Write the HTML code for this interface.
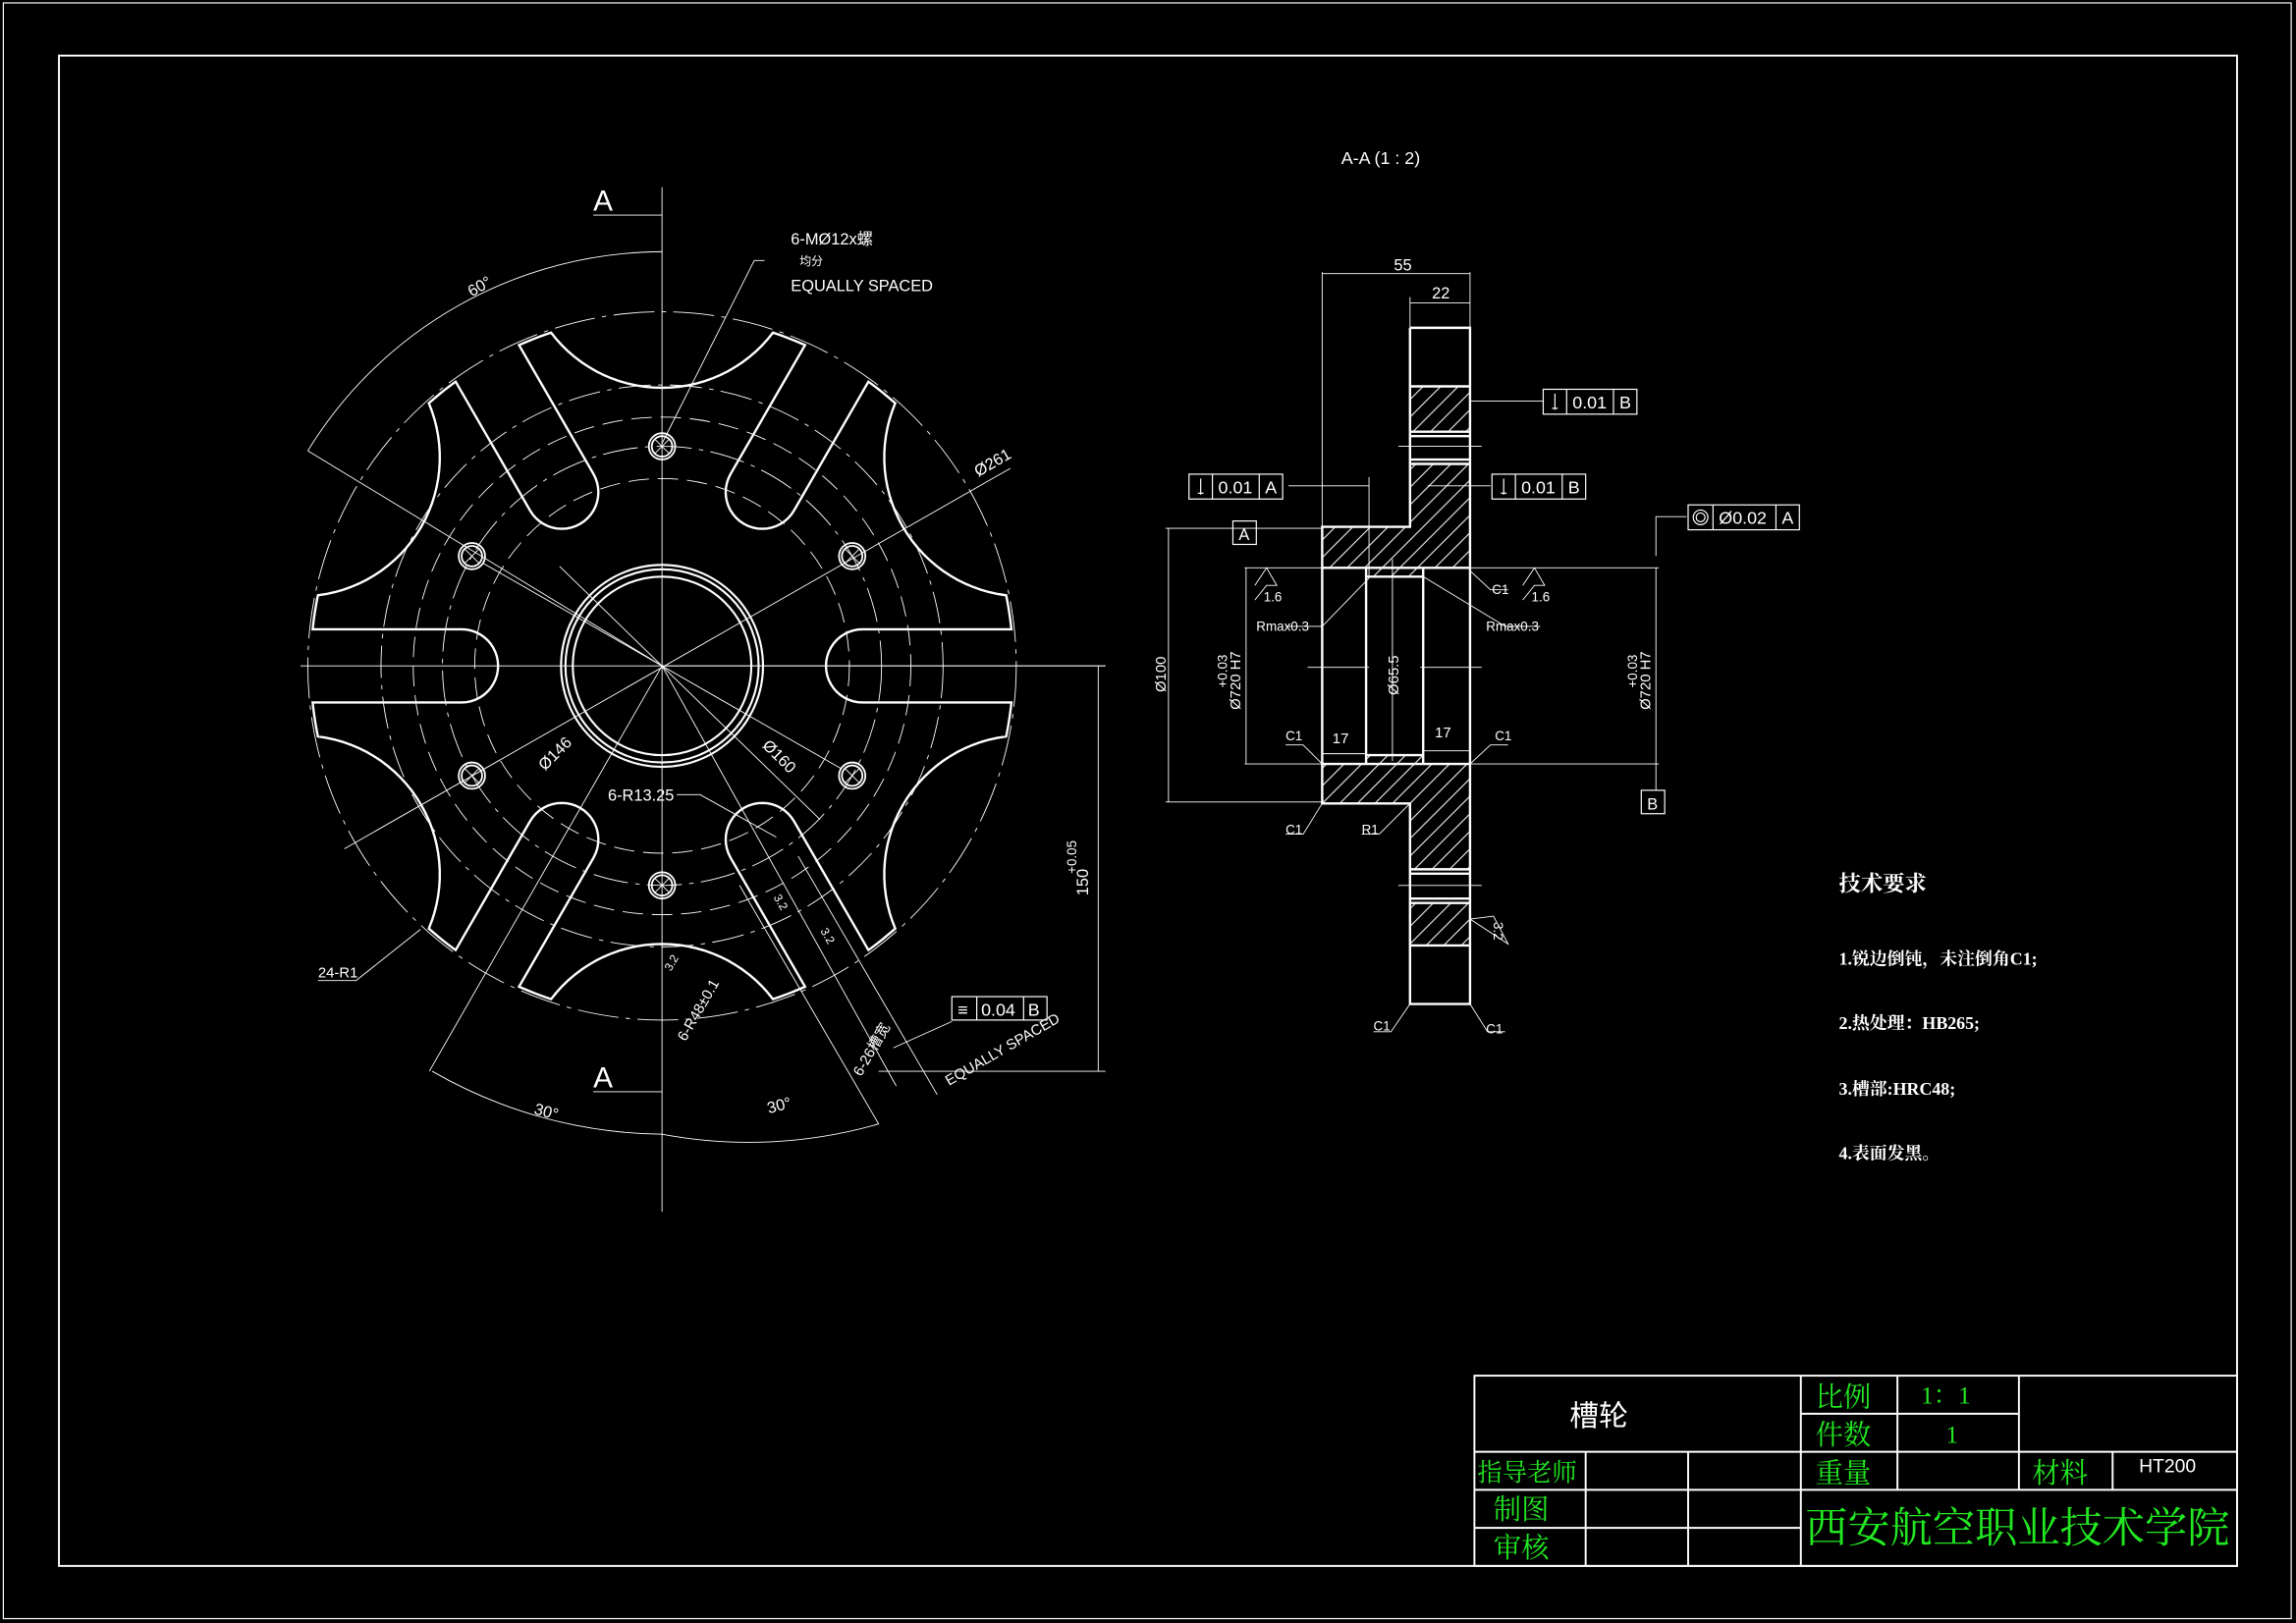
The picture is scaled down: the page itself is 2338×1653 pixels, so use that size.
<!DOCTYPE html>
<html><head><meta charset="utf-8">
<style>
html,body{margin:0;padding:0;background:#000;width:2338px;height:1653px;overflow:hidden}
svg{display:block}
text{font-family:"Liberation Sans","Noto Sans CJK SC",sans-serif;fill:#fff}
.g{fill:#22e822;font-family:"Liberation Serif","Noto Serif CJK SC","Noto Sans CJK SC",serif}
.c{font-family:"Liberation Serif","Noto Serif CJK SC","Noto Sans CJK SC",serif;font-weight:bold}
</style></head>
<body>
<svg id="s" width="2338" height="1653" viewBox="0 0 1568 1109" xmlns="http://www.w3.org/2000/svg">
<rect x="0" y="0" width="1568" height="1109" fill="#000"/>
<g stroke="#fff" fill="none">
<rect x="2" y="2" width="1563" height="1104" stroke-width="0.8"/>
<rect x="40" y="38" width="1488" height="1032" stroke-width="1.3"/>
<!-- title block -->
<g stroke-width="1.3">
<rect x="1007" y="940" width="521" height="130"/>
<line x1="1230" y1="966" x2="1379" y2="966"/>
<line x1="1007" y1="992" x2="1528" y2="992"/>
<line x1="1007" y1="1018" x2="1528" y2="1018"/>
<line x1="1007" y1="1044" x2="1230" y2="1044"/>
<line x1="1083" y1="992" x2="1083" y2="1070"/>
<line x1="1153" y1="992" x2="1153" y2="1070"/>
<line x1="1230" y1="940" x2="1230" y2="1070"/>
<line x1="1296" y1="940" x2="1296" y2="1018"/>
<line x1="1379" y1="940" x2="1379" y2="1018"/>
<line x1="1443" y1="992" x2="1443" y2="1018"/>
</g>

<!-- gear view -->
<g stroke-width="0.6">
<line x1="452" y1="128" x2="452" y2="828"/>
<line x1="205" y1="455" x2="755" y2="455"/>
<circle cx="452" cy="455" r="242" stroke-dasharray="28 5 3 5"/>
<circle cx="452" cy="455" r="150" stroke-dasharray="24 5 3 5"/>
<circle cx="452" cy="455" r="128" stroke-dasharray="14 6"/>
<circle cx="452" cy="455" r="170" stroke-dasharray="14 6"/>
<circle cx="452" cy="455" r="192" stroke-dasharray="22 5 3 5"/>
<!-- diagonal dim lines -->
<line x1="330" y1="385" x2="574" y2="525"/>
<line x1="235" y1="580" x2="690" y2="320"/>
<line x1="210" y1="308" x2="452" y2="455"/>
<line x1="382" y1="387" x2="560" y2="560"/>
<line x1="452" y1="455" x2="293" y2="732"/>
<line x1="452" y1="455" x2="612" y2="742"/>
<!-- 60 deg arc -->
<path d="M210,308 A285,285 0 0 1 452,172"/>
<path d="M295,732 A320,320 0 0 0 452,775 A320,320 0 0 0 600,768"/>
<!-- A markers -->
<line x1="405" y1="147" x2="452" y2="147"/>
<line x1="405" y1="746" x2="452" y2="746"/>
<!-- leaders -->
<polyline points="522,178 515,178 452,303"/>
<polyline points="217,670 243,670 287,635"/>
<polyline points="462,543 478,543 530,572"/>
<line x1="650" y1="698" x2="610" y2="716"/>
<!-- 150 dim -->
<line x1="452" y1="455" x2="755" y2="455"/>
<line x1="750" y1="455" x2="750" y2="732"/>
<line x1="600" y1="732" x2="755" y2="732"/>
<!-- slot dimension lines -->
<line x1="505" y1="605" x2="600" y2="768"/>
<line x1="545" y1="585" x2="640" y2="748"/>
</g>
<path id="gear" stroke-width="1.6"/>
<g stroke-width="1.4">
<circle cx="452" cy="455" r="69"/>
<circle cx="452" cy="455" r="66"/>
<circle cx="452" cy="455" r="61"/>
</g>
<g id="holes" stroke-width="1.2"></g>

<!-- section view A-A -->
<g id="hatch" stroke-width="0.6"></g>
<g stroke-width="1.6">
<polyline points="963,224 1004,224 1004,686 963,686 963,549 903,549 903,360 963,360 963,224"/>
<line x1="903" y1="388" x2="1004" y2="388"/>
<line x1="903" y1="522" x2="1004" y2="522"/>
<line x1="933" y1="388" x2="933" y2="522"/>
<line x1="972" y1="388" x2="972" y2="522"/>
<line x1="933" y1="394" x2="972" y2="394"/>
<line x1="933" y1="516" x2="972" y2="516"/>
<line x1="963" y1="264" x2="1004" y2="264"/>
<line x1="963" y1="295" x2="1004" y2="295"/>
<line x1="963" y1="298" x2="1004" y2="298"/>
<line x1="963" y1="314" x2="1004" y2="314"/>
<line x1="963" y1="317" x2="1004" y2="317"/>
<line x1="963" y1="594" x2="1004" y2="594"/>
<line x1="963" y1="597" x2="1004" y2="597"/>
<line x1="963" y1="614" x2="1004" y2="614"/>
<line x1="963" y1="617" x2="1004" y2="617"/>
<line x1="963" y1="646" x2="1004" y2="646"/>
</g>
<g stroke-width="0.6">
<line x1="955" y1="305" x2="1012" y2="305"/>
<line x1="955" y1="605" x2="1012" y2="605"/>
<line x1="893" y1="456" x2="935" y2="456"/>
<line x1="970" y1="456" x2="1012" y2="456"/>
<line x1="903" y1="186" x2="903" y2="360"/>
<line x1="1004" y1="186" x2="1004" y2="224"/>
<line x1="963" y1="203" x2="963" y2="224"/>
<line x1="903" y1="187" x2="1004" y2="187"/>
<line x1="963" y1="207" x2="1004" y2="207"/>
<line x1="796" y1="361" x2="903" y2="361"/>
<line x1="796" y1="548" x2="903" y2="548"/>
<line x1="798" y1="361" x2="798" y2="548"/>
<line x1="850" y1="388" x2="903" y2="388"/>
<line x1="850" y1="522" x2="903" y2="522"/>
<line x1="851" y1="388" x2="851" y2="522"/>
<line x1="1004" y1="388" x2="1133" y2="388"/>
<line x1="1004" y1="522" x2="1133" y2="522"/>
<line x1="1131" y1="388" x2="1131" y2="522"/>
<polyline points="1152,353 1131,353 1131,380"/>
<line x1="1131" y1="522" x2="1131" y2="540"/>
<line x1="951" y1="382" x2="951" y2="520"/>
<line x1="903" y1="515" x2="933" y2="515"/>
<line x1="972" y1="513" x2="1004" y2="513"/>
<line x1="880" y1="332" x2="935" y2="332"/>
<line x1="935" y1="326" x2="935" y2="395"/>
<line x1="975" y1="332" x2="1018" y2="332"/>
<line x1="1004" y1="274" x2="1054" y2="274"/>
<polyline points="878,428 903,428 935,395"/>
<polyline points="1052,428 1028,428 972,394"/>
<polyline points="857,410 865,400 872,400 865,388 857,400"/>
<polyline points="1040,410 1048,400 1055,400 1048,388 1040,400"/>
<polyline points="1030,403 1018,403 1004,390"/>
<polyline points="1030,509 1018,509 1004,522"/>
<polyline points="878,509 890,509 903,522"/>
<polyline points="878,570 890,570 903,549"/>
<polyline points="930,570 942,570 963,549"/>
<polyline points="938,705 950,705 963,686"/>
<polyline points="1028,705 1016,705 1004,686"/>
<polyline points="1004,628 1030,645 1020,626 1004,628"/>
</g>
<g stroke-width="0.8">
<rect x="812" y="324" width="64" height="17"/><line x1="828" y1="324" x2="828" y2="341"/><line x1="860" y1="324" x2="860" y2="341"/>
<rect x="1019" y="324" width="64" height="17"/><line x1="1035" y1="324" x2="1035" y2="341"/><line x1="1067" y1="324" x2="1067" y2="341"/>
<rect x="1054" y="266" width="64" height="17"/><line x1="1070" y1="266" x2="1070" y2="283"/><line x1="1102" y1="266" x2="1102" y2="283"/>
<rect x="1153" y="345" width="76" height="17"/><line x1="1170" y1="345" x2="1170" y2="362"/><line x1="1213" y1="345" x2="1213" y2="362"/>
<circle cx="1161.5" cy="353.5" r="5"/><circle cx="1161.5" cy="353.5" r="3"/>
<rect x="842" y="356" width="16" height="16"/>
<rect x="1121" y="540" width="16" height="16"/>
<rect x="650" y="681" width="65" height="16"/><line x1="667" y1="681" x2="667" y2="697"/><line x1="699" y1="681" x2="699" y2="697"/>
<line x1="818" y1="337" x2="822" y2="337"/><line x1="820" y1="327" x2="820" y2="338"/>
<line x1="1025" y1="337" x2="1029" y2="337"/><line x1="1027" y1="327" x2="1027" y2="338"/>
<line x1="1060" y1="279" x2="1064" y2="279"/><line x1="1062" y1="269" x2="1062" y2="280"/>
</g>
</g>

<!-- gear texts -->
<text x="405" y="144" font-size="20">A</text>
<text x="405" y="743" font-size="20">A</text>
<text x="540" y="167" font-size="11">6-MØ12x螺</text>
<text x="546" y="181" font-size="8">均分</text>
<text x="540" y="199" font-size="11">EQUALLY SPACED</text>
<text x="322" y="203" font-size="11" transform="rotate(-30 322 203)">60°</text>
<text x="364" y="761" font-size="11" transform="rotate(15 364 761)">30°</text>
<text x="525" y="761" font-size="11" transform="rotate(-15 525 761)">30°</text>
<text x="668" y="326" font-size="11" transform="rotate(-30 668 326)">Ø261</text>
<text x="372" y="527" font-size="11" transform="rotate(-45 372 527)">Ø146</text>
<text x="520" y="510" font-size="11" transform="rotate(45 520 510)">Ø160</text>
<text x="415" y="547" font-size="11">6-R13.25</text>
<text x="217" y="668" font-size="10">24-R1</text>
<text x="743" y="612" font-size="11" transform="rotate(-90 743 612)">150</text>
<text x="735" y="597" font-size="9" transform="rotate(-90 735 597)">+0.05</text>
<text x="670" y="694" font-size="12">0.04</text><text x="702" y="694" font-size="12">B</text>
<text x="654" y="694" font-size="12">≡</text>
<text x="468" y="712" font-size="10" transform="rotate(-60 468 712)">6-R48±0.1</text>
<text x="588" y="736" font-size="10" transform="rotate(-60 588 736)">6-26槽宽</text>
<text x="648" y="742" font-size="10" transform="rotate(-30 648 742)">EQUALLY SPACED</text>
<text x="528" y="613" font-size="8" transform="rotate(60 528 613)">3.2</text>
<text x="560" y="636" font-size="8" transform="rotate(60 560 636)">3.2</text>
<text x="458" y="664" font-size="8" transform="rotate(-60 458 664)">3.2</text>

<!-- section texts -->
<text x="916" y="112" font-size="12">A-A  (1 : 2)</text>
<text x="952" y="185" font-size="11">55</text>
<text x="978" y="204" font-size="11">22</text>
<text x="832" y="337" font-size="12">0.01</text><text x="864" y="337" font-size="12">A</text>
<text x="1039" y="337" font-size="12">0.01</text><text x="1071" y="337" font-size="12">B</text>
<text x="1074" y="279" font-size="12">0.01</text><text x="1106" y="279" font-size="12">B</text>
<text x="1174" y="358" font-size="12">Ø0.02</text><text x="1217" y="358" font-size="12">A</text>
<text x="846" y="369" font-size="11">A</text>
<text x="1125" y="553" font-size="11">B</text>
<text x="863" y="411" font-size="9">1.6</text>
<text x="1046" y="411" font-size="9">1.6</text>
<text x="858" y="431" font-size="9">Rmax0.3</text>
<text x="1015" y="431" font-size="9">Rmax0.3</text>
<text x="1019" y="406" font-size="9">C1</text>
<text x="1021" y="506" font-size="9">C1</text>
<text x="878" y="506" font-size="9">C1</text>
<text x="878" y="570" font-size="9">C1</text>
<text x="930" y="570" font-size="9">R1</text>
<text x="938" y="704" font-size="9">C1</text>
<text x="1015" y="706" font-size="9">C1</text>
<text x="910" y="508" font-size="10">17</text>
<text x="980" y="504" font-size="10">17</text>
<text x="955" y="475" font-size="10" transform="rotate(-90 955 475)">Ø65.5</text>
<text x="796" y="473" font-size="10" transform="rotate(-90 796 473)">Ø100</text>
<text x="847" y="485" font-size="10" transform="rotate(-90 847 485)">Ø720  H7</text>
<text x="838" y="470" font-size="9" transform="rotate(-90 838 470)">+0.03</text>
<text x="1127" y="485" font-size="10" transform="rotate(-90 1127 485)">Ø720  H7</text>
<text x="1118" y="470" font-size="9" transform="rotate(-90 1118 470)">+0.03</text>
<text x="1020" y="630" font-size="9" transform="rotate(90 1020 630)">3.2</text>

<!-- tech requirements -->
<text class="c" x="1256" y="609" font-size="15">技术要求</text>
<text class="c" x="1256" y="659" font-size="12">1.锐边倒钝，未注倒角C1;</text>
<text class="c" x="1256" y="703" font-size="12">2.热处理：HB265;</text>
<text class="c" x="1256" y="748" font-size="12">3.槽部:HRC48;</text>
<text class="c" x="1256" y="792" font-size="12">4.表面发黑。</text>

<!-- title block texts -->
<text x="1072" y="974" font-size="20" font-family="Liberation Sans,Noto Sans CJK SC,sans-serif">槽轮</text>
<text class="g" x="1240" y="961" font-size="19">比例</text>
<text class="g" x="1312" y="959" font-size="17">1：1</text>
<text class="g" x="1240" y="987" font-size="19">件数</text>
<text class="g" x="1329" y="986" font-size="17">1</text>
<text class="g" x="1240" y="1013" font-size="19">重量</text>
<text class="g" x="1388" y="1013" font-size="19">材料</text>
<text x="1461" y="1006" font-size="13">HT200</text>
<text class="g" x="1009" y="1012" font-size="17">指导老师</text>
<text class="g" x="1020" y="1038" font-size="19">制图</text>
<text class="g" x="1020" y="1064" font-size="19">审核</text>
<text class="g" x="1233" y="1054" font-size="29">西安航空职业技术学院</text>
</svg>
<script>
(function(){
var cx=452,cy=455,Ro=240,w=25,rc=137,D=285,R=95;
var pts=[];
function P(x,y){pts.push((x).toFixed(2)+","+(y).toFixed(2));}
function rad(d){return d*Math.PI/180;}
var phi=Math.acos((Ro*Ro+D*D-R*R)/(2*Ro*D));
for(var k=0;k<6;k++){
 var a=rad(k*60),ux=Math.cos(a),uy=Math.sin(a),nx=-uy,ny=ux;
 var to=Math.sqrt(Ro*Ro-w*w);
 P(cx+to*ux-w*nx,cy+to*uy-w*ny);
 P(cx+rc*ux-w*nx,cy+rc*uy-w*ny);
 for(var i=1;i<=24;i++){var t=-Math.PI/2-i*Math.PI/24;
  var lx=rc+w*Math.cos(t), ly=w*Math.sin(t)*-1;
  // local coords: along u = lx, along n = ly
  var ang=-Math.PI/2 - i*Math.PI/24;
  var lu=rc+w*Math.cos(ang+Math.PI), ln=-w*Math.sin(ang+Math.PI);
  lu=rc-w*Math.sin(i*Math.PI/24); ln=-w*Math.cos(i*Math.PI/24);
  P(cx+lu*ux+ln*nx,cy+lu*uy+ln*ny);}
 P(cx+to*ux+w*nx,cy+to*uy+w*ny);
 var a0=a+Math.asin(w/Ro), b=a+rad(30), a1=b-phi;
 for(var j=0;j<=6;j++){var q=a0+(a1-a0)*j/6;P(cx+Ro*Math.cos(q),cy+Ro*Math.sin(q));}
 // concave arc around center at D along b
 var ccx=cx+D*Math.cos(b),ccy=cy+D*Math.sin(b);
 var s=Math.atan2(cy+Ro*Math.sin(a1)-ccy,cx+Ro*Math.cos(a1)-ccx);
 var e=Math.atan2(cy+Ro*Math.sin(b+phi)-ccy,cx+Ro*Math.cos(b+phi)-ccx);
 var d=e-s; while(d>0)d-=2*Math.PI; // go the inner way
 if(d<-Math.PI) d+=2*Math.PI;
 for(var j=1;j<=30;j++){var q=s+d*j/30;P(ccx+R*Math.cos(q),ccy+R*Math.sin(q));}
 var a2=b+phi,a3=a+rad(60)-Math.asin(w/Ro);
 for(var j=0;j<=6;j++){var q=a2+(a3-a2)*j/6;P(cx+Ro*Math.cos(q),cy+Ro*Math.sin(q));}
}
document.getElementById('gear').setAttribute('d','M'+pts.join(' L')+' Z');
var h='';
for(var k=0;k<6;k++){var a=rad(30+k*60),x=cx+150*Math.cos(a),y=cy+150*Math.sin(a);
 h+='<circle cx="'+x+'" cy="'+y+'" r="9"/><circle cx="'+x+'" cy="'+y+'" r="7"/>'+
 '<line x1="'+(x-5)+'" y1="'+(y-5)+'" x2="'+(x+5)+'" y2="'+(y+5)+'" stroke-width="0.6"/>'+
 '<line x1="'+(x-5)+'" y1="'+(y+5)+'" x2="'+(x+5)+'" y2="'+(y-5)+'" stroke-width="0.6"/>';}
document.getElementById('holes').innerHTML=h;
// hatching
var polys=[[[963,264],[1004,264],[1004,295],[963,295]],
 [[963,317],[1004,317],[1004,388],[903,388],[903,360],[963,360]],
 [[903,522],[1004,522],[1004,594],[963,594],[963,549],[903,549]],
 [[963,617],[1004,617],[1004,646],[963,646]],
 [[933,388],[972,388],[972,394],[933,394]],[[933,516],[972,516],[972,522],[933,522]]];
var defs='<defs><pattern id="hp" patternUnits="userSpaceOnUse" width="12" height="12"><path d="M-3,3 L3,-3 M0,12 L12,0 M9,15 L15,9" stroke="#fff" stroke-width="0.7"/></pattern></defs>';
var hh=defs;
polys.forEach(function(p){hh+='<polygon points="'+p.map(function(q){return q.join(',')}).join(' ')+'" fill="url(#hp)" stroke="none"/>';});
document.getElementById('hatch').innerHTML=hh;
})();
</script>
</body></html>
